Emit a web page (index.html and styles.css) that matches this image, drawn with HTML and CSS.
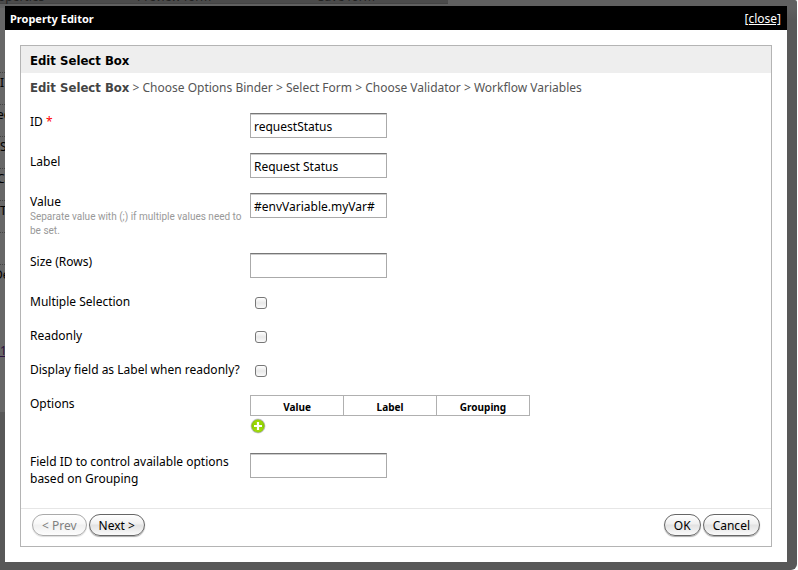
FILE: index.html
```html
<!DOCTYPE html>
<html lang="en">
<head>
<meta charset="utf-8">
<title>Property Editor</title>
<link rel="stylesheet" href="styles.css">
</head>
<body>
<div class="backdrop" aria-hidden="true">
  <div class="steps"><span class="step step-a">Properties</span><span class="step step-b">Preview form</span><span class="step step-c">Save form</span></div>
  <ul class="palette">
    <li>I</li><li class="tuck">ec</li><li>S</li><li class="tuck">Ca</li><li>T</li><li></li><li class="tuck-more">De</li>
  </ul>
  <span class="palette-link">1</span>
</div>
<main class="dialog">
  <header class="titlebar">
    <h1>Property Editor</h1>
    <a class="close" href="#">[close]</a>
  </header>
  <form class="panel">
    <h2 class="panel-title">Edit Select Box</h2>
    <nav class="crumbs"><strong>Edit Select Box</strong> &gt; Choose Options Binder &gt; Select Form &gt; Choose Validator &gt; Workflow Variables</nav>
    <div class="fields">
      <div class="row"><label for="id">ID <span class="required">*</span></label><input class="text" id="id" type="text" value="requestStatus"></div>
      <div class="row"><label for="label">Label</label><input class="text" id="label" type="text" value="Request Status"></div>
      <div class="row"><label for="value">Value<small class="hint">Separate value with (;) if multiple values need to be set.</small></label><input class="text" id="value" type="text" value="#envVariable.myVar#"></div>
      <div class="row"><label for="size">Size (Rows)</label><input class="text" id="size" type="text"></div>
      <div class="row"><label for="multiple">Multiple Selection</label><input class="check" id="multiple" type="checkbox"></div>
      <div class="row"><label for="readonly">Readonly</label><input class="check" id="readonly" type="checkbox"></div>
      <div class="row"><label for="aslabel">Display field as Label when readonly?</label><input class="check" id="aslabel" type="checkbox"></div>
      <div class="row">
        <span>Options</span>
        <div class="options">
          <table class="grid"><thead><tr><th>Value</th><th>Label</th><th>Grouping</th></tr></thead></table>
          <button class="add" type="button" aria-label="Add option">
            <svg viewBox="0 0 16 16" width="16" height="16">
              <defs><linearGradient id="green" x1="0" y1="0" x2="0" y2="1"><stop offset="0" stop-color="#a4dc08"/><stop offset="0.5" stop-color="#8ed000"/><stop offset="1" stop-color="#a8e010"/></linearGradient></defs>
              <circle cx="8" cy="8" r="7.5" fill="#cfcbe0"/>
              <circle cx="8" cy="8" r="6.3" fill="url(#green)" stroke="#78b400" stroke-width="0.6"/>
              <path d="M8 4v8M4 8h8" stroke="#fff" stroke-width="2.2"/>
            </svg>
          </button>
        </div>
      </div>
      <div class="row"><label for="control">Field ID to control available options based on Grouping</label><input class="text" id="control" type="text"></div>
    </div>
    <footer class="actions">
      <button class="btn" type="button" disabled>&lt; Prev</button>
      <button class="btn" type="button">Next &gt;</button>
      <button class="btn push" type="button">OK</button>
      <button class="btn" type="button">Cancel</button>
    </footer>
  </form>
</main>
</body>
</html>
```
FILE: styles.css
```css
* { box-sizing: border-box; }

body {
  margin: 0;
  padding: 6px 11px 8px 5px;
  position: relative;
  overflow: hidden;
  background: #fff;
  color: #000;
  font: 12px/17px "Noto Sans", "DejaVu Sans", sans-serif;
}

/* Dimmed page behind the dialog */
.backdrop {
  position: absolute;
  inset: 0 1px 0 0;
  overflow: hidden;
  border-radius: 0 2px 6px 0;
  background: linear-gradient(#606060 0, #606060 8px, #585858 20px, #585858 100%);
}
.backdrop::before {
  content: "";
  position: absolute;
  inset: 8px auto 158px 0;
  width: 5px;
  background: #676767;
}
.steps {
  position: absolute;
  top: 0;
  left: 0;
  width: 448px;
  height: 4px;
  background: #4b4b4b;
  border-bottom: 1px solid #444;
  color: #222;
}
.step { position: absolute; top: -11px; line-height: 15px; }
.step-a { left: -14px; }
.step-b { left: 137px; }
.step-c { left: 318px; }
.palette {
  position: absolute;
  top: 72px;
  left: 0;
  margin: 0;
  padding: 0;
  list-style: none;
}
.palette li { height: 32px; line-height: 20px; border-top: 1px dotted #444; }
.palette .tuck { text-indent: -3px; }
.palette .tuck-more { text-indent: -6px; }
.palette-link {
  position: absolute;
  top: 342px;
  left: 0;
  color: #2c1240;
  text-decoration: underline;
}

.dialog { position: relative; background: #fff; padding-bottom: 15px; }
.titlebar {
  display: flex;
  justify-content: space-between;
  height: 24px;
  padding: 4px 6px 0 5px;
  background: #000;
  color: #fff;
}
.titlebar h1 { margin: 0; font-size: 11px; line-height: 17px; font-weight: bold; }
.close { color: #fff; }

.panel { margin: 15px 15px 0; border: 1px solid #b4b4b4; }
.panel-title,
.crumbs strong {
  font-family: "DejaVu Sans Condensed", "DejaVu Sans", sans-serif;
  font-size: 13px;
  font-weight: bold;
}
.panel-title { margin: 0; padding: 6px 9px 4px; background: #eee; }
.crumbs { padding: 6px 9px 5px; color: #555; }
.crumbs strong { color: #444; }

.fields { display: grid; gap: 15px; padding: 12px 9px 21px; }
.row { display: grid; grid-template-columns: 220px 1fr; align-items: start; }
.required { color: #f00; }
.hint {
  display: block;
  color: #999;
  font-family: Roboto, "Noto Sans", sans-serif;
  font-size: 10px;
  line-height: 14px;
}

.text {
  width: 137px;
  height: 25px;
  margin: 0;
  padding: 1px 3px 0;
  border: 1px solid #aaa;
  border-top-color: #777;
  box-shadow: inset 0 1px 0 #ccc;
  background: #fff;
  color: #000;
  font: inherit;
}
.check {
  appearance: none;
  width: 12px;
  height: 12px;
  margin: 4px 0 3px 5px;
  border: 1px solid #777;
  border-radius: 3px;
  background: linear-gradient(#fff, #e8e8e8 50%, #fafafa);
}

.grid { border-collapse: collapse; table-layout: fixed; width: 280px; }
.grid th {
  height: 20px;
  padding: 3px 0 0;
  border: 1px solid #b0b0b0;
  font-size: 10px;
  line-height: 15px;
}
.options { height: 43px; }
.add { display: block; margin: 2px 0 0; padding: 0; border: 0; background: none; }
.add svg { display: block; }

.actions {
  display: flex;
  gap: 2px;
  padding: 5px 11px 10px;
  border-top: 1px solid #e6e6e6;
}
.btn {
  height: 22px;
  padding: 1px 9px 0;
  border: 1px solid #666;
  border-radius: 11px;
  background: linear-gradient(#fff, #f0f0f0 45%, #e2e2e2 50%, #fafafa);
  box-shadow: 0 1px 1px #aaa;
  color: #000;
  font: inherit;
}
.btn:disabled {
  border-color: #aaa;
  background: linear-gradient(#fff, #f8f8f8 45%, #f0f0f0 50%, #fdfdfd);
  color: #808080;
  box-shadow: 0 1px 1px #ddd;
}
.push { margin-left: auto; }
```
